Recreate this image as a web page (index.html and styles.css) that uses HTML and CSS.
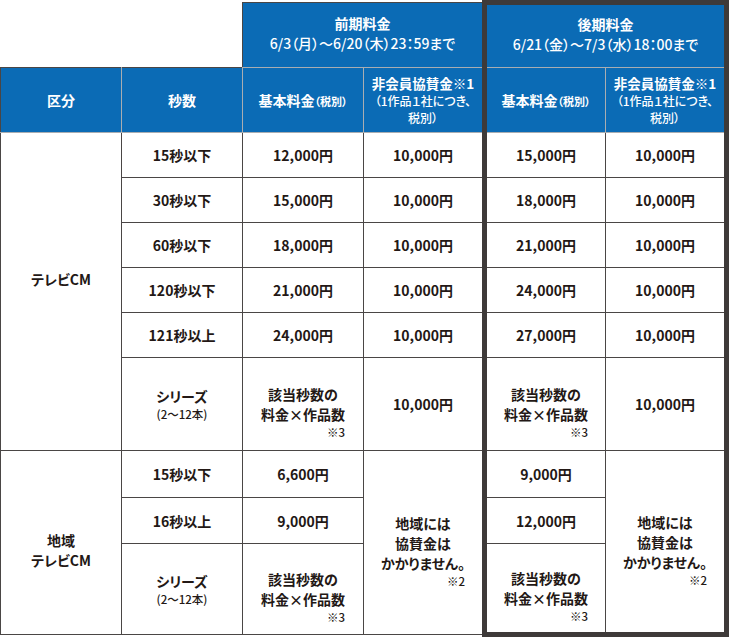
FILE: index.html
```html
<!DOCTYPE html>
<html lang="ja">
<head>
<meta charset="utf-8">
<title>料金表</title>
<link rel="stylesheet" href="styles.css">
</head>
<body>
<table class="fee-table">
  <colgroup>
    <col><col><col><col><col><col>
  </colgroup>
  <thead>
    <tr class="h1">
      <td class="blank"></td>
      <td class="blank"></td>
      <th class="period early" colspan="2">
        <span class="p-title">前期料金</span>
        <span class="p-date">6/3（月）～6/20（木）23：59まで</span>
      </th>
      <th class="period late-top" colspan="2">
        <span class="p-title">後期料金</span>
        <span class="p-date">6/21（金）～7/3（水）18：00まで</span>
      </th>
    </tr>
    <tr class="h2">
      <th class="dark-top dark-left">区分</th>
      <th class="dark-top">秒数</th>
      <th>基本料金<span class="small">（税別）</span></th>
      <th class="member">
        <span class="m-title">非会員協賛金※1</span>
        <span class="m-sub">（1作品１社につき、</span>
        <span class="m-sub">税別）</span>
      </th>
      <th class="late-l">基本料金<span class="small">（税別）</span></th>
      <th class="member late-r">
        <span class="m-title">非会員協賛金※1</span>
        <span class="m-sub">（1作品１社につき、</span>
        <span class="m-sub">税別）</span>
      </th>
    </tr>
  </thead>
  <tbody>
    <tr class="r45">
      <td rowspan="6" class="cat cat-tv">テレビCM</td>
      <td>15秒以下</td>
      <td>12,000円</td>
      <td>10,000円</td>
      <td class="late-l">15,000円</td>
      <td class="late-r">10,000円</td>
    </tr>
    <tr class="r45">
      <td>30秒以下</td>
      <td>15,000円</td>
      <td>10,000円</td>
      <td class="late-l">18,000円</td>
      <td class="late-r">10,000円</td>
    </tr>
    <tr class="r45">
      <td>60秒以下</td>
      <td>18,000円</td>
      <td>10,000円</td>
      <td class="late-l">21,000円</td>
      <td class="late-r">10,000円</td>
    </tr>
    <tr class="r45">
      <td>120秒以下</td>
      <td>21,000円</td>
      <td>10,000円</td>
      <td class="late-l">24,000円</td>
      <td class="late-r">10,000円</td>
    </tr>
    <tr class="r45">
      <td>121秒以上</td>
      <td>24,000円</td>
      <td>10,000円</td>
      <td class="late-l">27,000円</td>
      <td class="late-r">10,000円</td>
    </tr>
    <tr class="r-series">
      <td><span class="s-title">シリーズ</span><span class="s-sub">(2～12本)</span></td>
      <td><span class="block"><span class="line">該当秒数の</span><span class="line">料金×作品数</span><span class="note">※3</span></span></td>
      <td>10,000円</td>
      <td class="late-l"><span class="block"><span class="line">該当秒数の</span><span class="line">料金×作品数</span><span class="note">※3</span></span></td>
      <td class="late-r">10,000円</td>
    </tr>
    <tr class="r47">
      <td rowspan="3" class="cat cat-local">地域<br>テレビCM</td>
      <td>15秒以下</td>
      <td>6,600円</td>
      <td rowspan="3"><span class="block"><span class="line">地域には</span><span class="line">協賛金は</span><span class="line">かかりません。</span><span class="note">※2</span></span></td>
      <td class="late-l">9,000円</td>
      <td rowspan="3" class="late-r late-b"><span class="block"><span class="line">地域には</span><span class="line">協賛金は</span><span class="line">かかりません。</span><span class="note">※2</span></span></td>
    </tr>
    <tr class="r46">
      <td>16秒以上</td>
      <td>9,000円</td>
      <td class="late-l">12,000円</td>
    </tr>
    <tr class="r91">
      <td><span class="s-title">シリーズ</span><span class="s-sub">(2～12本)</span></td>
      <td><span class="block"><span class="line">該当秒数の</span><span class="line">料金×作品数</span><span class="note">※3</span></span></td>
      <td class="late-l late-b"><span class="block"><span class="line">該当秒数の</span><span class="line">料金×作品数</span><span class="note">※3</span></span></td>
    </tr>
  </tbody>
</table>
</body>
</html>
```

FILE: styles.css
```css
body {
  margin: 0;
  background: #ffffff;
  font-family: "Noto Sans CJK JP", "Noto Sans", sans-serif;
  color: #231815;
}

.fee-table {
  border-collapse: collapse;
  table-layout: fixed;
  width: 729px;
  font-feature-settings: "palt";
}

.fee-table col {
  width: 121px;
}

.fee-table td,
.fee-table th {
  padding: 0;
  text-align: center;
  vertical-align: middle;
  border: 1px solid #4a4645;
  font-size: 14px;
  font-weight: 700;
  line-height: 20px;
}

.fee-table th {
  color: #ffffff;
  background: #0b6bb5;
  border-color: #a9adb1;
}

.fee-table .blank {
  border: none;
  background: #ffffff;
}

.h1 {
  height: 65px;
}

.h2 {
  height: 65px;
}

.fee-table .period {
  padding-bottom: 4px;
}

.fee-table .early {
  border-top-color: #4a4645;
  border-left-color: #4a4645;
}

.fee-table .dark-top {
  border-top-color: #4a4645;
}

.fee-table .dark-left {
  border-left-color: #4a4645;
}

.p-title {
  display: block;
  font-size: 14px;
  line-height: 20px;
}

.p-date {
  display: block;
  font-size: 14px;
  font-weight: 500;
  line-height: 20px;
}

.small {
  font-size: 11px;
  font-weight: 700;
}

.m-title {
  display: block;
  font-size: 13.5px;
  line-height: 18px;
}

.m-sub {
  display: block;
  font-size: 12px;
  font-weight: 500;
  line-height: 17px;
}

.fee-table .late-top {
  border-top: 5px solid #3e3a39;
  border-left: 5px solid #3e3a39;
  border-right: 5px solid #3e3a39;
}

.fee-table .late-l {
  border-left: 5px solid #3e3a39;
}

.fee-table .late-r {
  border-right: 5px solid #3e3a39;
}

.fee-table .late-b {
  border-bottom: 5px solid #3e3a39;
}

.r45 {
  height: 45px;
}

.r-series {
  height: 93px;
}

.r47 {
  height: 47px;
}

.r46 {
  height: 46px;
}

.r91 {
  height: 91px;
}

.fee-table .cat-tv {
  padding-bottom: 26px;
}

.fee-table .cat-local {
  padding-top: 15px;
}

.s-title {
  display: block;
  line-height: 20px;
}

.s-sub {
  display: block;
  font-size: 11.5px;
  font-weight: 500;
  line-height: 16px;
}

.block {
  display: inline-block;
  text-align: center;
  vertical-align: middle;
}

.line {
  display: block;
  line-height: 20px;
}

.note {
  display: block;
  text-align: right;
  font-size: 11.5px;
  font-weight: 500;
  line-height: 16px;
  margin-bottom: -16px;
}
```
